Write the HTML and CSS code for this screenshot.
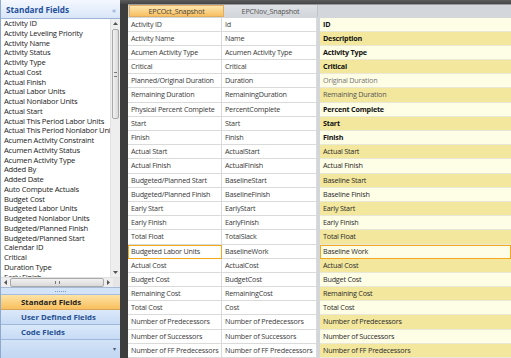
FILE: index.html
```html
<!DOCTYPE html>
<html lang="en">
<head>
    <meta charset="UTF-8">
    <title>Field Mapping</title>
    <link rel="stylesheet" href="styles.css">
</head>
<body>
<div class="app">

    <!-- Left field picker -->
    <div class="sidebar">
        <div class="side-head">
            <span>Standard Fields</span>
            <span class="collapse">&laquo;</span>
        </div>

        <div class="list-box">
            <div class="list-main">
                <ul class="field-list">
                    <li>Activity ID</li>
                    <li>Activity Leveling Priority</li>
                    <li>Activity Name</li>
                    <li>Activity Status</li>
                    <li>Activity Type</li>
                    <li>Actual Cost</li>
                    <li>Actual Finish</li>
                    <li>Actual Labor Units</li>
                    <li>Actual Nonlabor Units</li>
                    <li>Actual Start</li>
                    <li>Actual This Period Labor Units</li>
                    <li>Actual This Period Nonlabor Units</li>
                    <li>Acumen Activity Constraint</li>
                    <li>Acumen Activity Status</li>
                    <li>Acumen Activity Type</li>
                    <li>Added By</li>
                    <li>Added Date</li>
                    <li>Auto Compute Actuals</li>
                    <li>Budget Cost</li>
                    <li>Budgeted Labor Units</li>
                    <li>Budgeted Nonlabor Units</li>
                    <li>Budgeted/Planned Finish</li>
                    <li>Budgeted/Planned Start</li>
                    <li>Calendar ID</li>
                    <li>Critical</li>
                    <li>Duration Type</li>
                    <li>Early Finish</li>
                </ul>
                <div class="vscroll">
                    <div class="arrow"><svg width="5" height="3" viewBox="0 0 5 3"><path d="M0 3 L2.5 0 L5 3Z" fill="#555"/></svg></div>
                    <div class="vtrack"><div class="vthumb"><span class="grip-v"></span></div></div>
                    <div class="arrow"><svg width="5" height="3" viewBox="0 0 5 3"><path d="M0 0 L2.5 3 L5 0Z" fill="#555"/></svg></div>
                </div>
            </div>
            <div class="hscroll">
                <div class="arrow"><svg width="3" height="5" viewBox="0 0 3 5"><path d="M3 0 L0 2.5 L3 5Z" fill="#555"/></svg></div>
                <div class="htrack"><div class="hthumb"><span class="grip-h"></span></div></div>
                <div class="arrow"><svg width="3" height="5" viewBox="0 0 3 5"><path d="M0 0 L3 2.5 L0 5Z" fill="#555"/></svg></div>
                <div class="corner"></div>
            </div>
        </div>

        <div class="splitter"><span class="dots"></span></div>

        <div class="nav-btn active">Standard Fields</div>
        <div class="nav-btn">User Defined Fields</div>
        <div class="nav-btn">Code Fields</div>
        <div class="nav-foot"><span class="more">&#9662;</span></div>
    </div>

    <!-- Mapping area -->
    <div class="main">
        <div class="top-band"></div>
        <div class="tabs">
            <div class="tab active">EPCOct_Snapshot</div>
            <div class="tab">EPCNov_Snapshot</div>
        </div>

        <div class="mapping">
            <div class="grid" id="grid"></div>
            <div class="targets" id="targets"></div>
        </div>
    </div>
</div>

<script>
    // source field, snapshot field, target field, style of target row
    const rows = [
        ['Activity ID', 'Id', 'ID', 'key'],
        ['Activity Name', 'Name', 'Description', 'key'],
        ['Acumen Activity Type', 'Acumen Activity Type', 'Activity Type', 'key'],
        ['Critical', 'Critical', 'Critical', 'key'],
        ['Planned/Original Duration', 'Duration', 'Original Duration', 'dim'],
        ['Remaining Duration', 'RemainingDuration', 'Remaining Duration', 'soft'],
        ['Physical Percent Complete', 'PercentComplete', 'Percent Complete', 'key'],
        ['Start', 'Start', 'Start', 'key'],
        ['Finish', 'Finish', 'Finish', 'key'],
        ['Actual Start', 'ActualStart', 'Actual Start', ''],
        ['Actual Finish', 'ActualFinish', 'Actual Finish', ''],
        ['Budgeted/Planned Start', 'BaselineStart', 'Baseline Start', ''],
        ['Budgeted/Planned Finish', 'BaselineFinish', 'Baseline Finish', ''],
        ['Early Start', 'EarlyStart', 'Early Start', ''],
        ['Early Finish', 'EarlyFinish', 'Early Finish', ''],
        ['Total Float', 'TotalSlack', 'Total Float', ''],
        ['Budgeted Labor Units', 'BaselineWork', 'Baseline Work', 'selected'],
        ['Actual Cost', 'ActualCost', 'Actual Cost', ''],
        ['Budget Cost', 'BudgetCost', 'Budget Cost', ''],
        ['Remaining Cost', 'RemainingCost', 'Remaining Cost', ''],
        ['Total Cost', 'Cost', 'Total Cost', ''],
        ['Number of Predecessors', 'Number of Predecessors', 'Number of Predecessors', ''],
        ['Number of Successors', 'Number of Successors', 'Number of Successors', ''],
        ['Number of FF Predecessors', 'Number of FF Predecessors', 'Number of FF Predecessors', '']
    ];

    const grid = document.getElementById('grid');
    const targets = document.getElementById('targets');

    rows.forEach((r, i) => {
        const src = document.createElement('div');
        src.className = 'cell' + (r[3] === 'selected' ? ' selected' : '');
        src.textContent = r[0];
        grid.appendChild(src);

        const snap = document.createElement('div');
        snap.className = 'cell';
        snap.textContent = r[1];
        grid.appendChild(snap);

        const t = document.createElement('div');
        t.className = 'target' + (i % 2 ? ' alt' : '') + (r[3] ? ' ' + r[3] : '');
        t.textContent = r[2];
        targets.appendChild(t);
    });
</script>
</body>
</html>
```

FILE: styles.css
```css
body {
    margin: 0;
    width: 511px;
    height: 358px;
    overflow: hidden;
    font-family: 'Open Sans', 'Noto Sans', sans-serif;
    font-size: 7.2px;
    letter-spacing: -0.2px;
    color: #333;
    background-color: #3d3d3d;
}

.app {
    display: flex;
    height: 358px;
}

/* ---- sidebar ---- */

.sidebar {
    width: 120px;
    display: flex;
    flex-direction: column;
    background-color: #c5daf4;
    border-left: 1px solid #8fa9cc;
    box-sizing: border-box;
}

.side-head {
    height: 18px;
    display: flex;
    align-items: center;
    justify-content: space-between;
    padding: 0 4px 0 5px;
    font-size: 8.2px;
    letter-spacing: 0;
    font-weight: bold;
    color: #1d4f9e;
    background: linear-gradient(#f4f8fe, #d9e6f8);
    border-bottom: 1px solid #9cb4d6;
}

.collapse {
    font-weight: normal;
    color: #6d8fc6;
    font-size: 8px;
}

.list-box {
    height: 268px;
    display: flex;
    flex-direction: column;
    background-color: #fff;
    border-bottom: 1px solid #a7bbd6;
}

.list-main {
    flex: 1;
    display: flex;
    overflow: hidden;
}

.field-list {
    flex: 1;
    list-style: none;
    margin: 0;
    padding: 0 0 0 3px;
    overflow: hidden;
    white-space: nowrap;
    font-size: 7.6px;
}

.field-list li {
    height: 9.75px;
    line-height: 9.75px;
    color: #222;
}

.vscroll {
    width: 9px;
    display: flex;
    flex-direction: column;
    background-color: #eeeeee;
    border-left: 1px solid #e2e2e2;
}

.arrow {
    height: 9px;
    width: 9px;
    display: flex;
    align-items: center;
    justify-content: center;
    flex-shrink: 0;
}

.vtrack {
    flex: 1;
    padding-top: 1px;
}

.vthumb {
    height: 88px;
    margin: 0 1px;
    border: 1px solid #a9a9a9;
    border-radius: 2px;
    background: linear-gradient(90deg, #f2f2f2, #d9d9d9);
    display: flex;
    align-items: center;
    justify-content: center;
}

.grip-v {
    width: 3px;
    height: 3px;
    border-top: 1px solid #777;
    border-bottom: 1px solid #777;
}

.hscroll {
    height: 9px;
    display: flex;
    background-color: #eeeeee;
    border-top: 1px solid #e2e2e2;
}

.htrack {
    flex: 1;
}

.hthumb {
    height: 7px;
    width: 92px;
    border: 1px solid #a9a9a9;
    border-radius: 2px;
    background: linear-gradient(#f2f2f2, #d9d9d9);
    display: flex;
    align-items: center;
    justify-content: center;
}

.grip-h {
    width: 3px;
    height: 3px;
    border-left: 1px solid #777;
    border-right: 1px solid #777;
}

.corner {
    width: 9px;
    background-color: #e6e6e6;
}

.splitter {
    height: 6px;
    display: flex;
    align-items: center;
    justify-content: center;
    background-color: #d4e4f8;
    border-bottom: 1px solid #a3bbdc;
}

.dots {
    width: 12px;
    height: 1px;
    background: repeating-linear-gradient(90deg, #7f99c0 0 1px, transparent 1px 2px);
}

.nav-btn {
    height: 14px;
    line-height: 14px;
    padding-left: 20px;
    font-size: 7.8px;
    letter-spacing: 0;
    font-weight: bold;
    color: #244f91;
    background: linear-gradient(#dbe8fa, #c6dbf5);
    border-bottom: 1px solid #9fb8da;
}

.nav-btn.active {
    color: #1e1e1e;
    background: linear-gradient(#fde3a6, #f9bf5d);
    border-bottom-color: #d6a45a;
}

.nav-foot {
    flex: 1;
    display: flex;
    justify-content: flex-end;
    align-items: center;
    padding-right: 4px;
    background: linear-gradient(#d3e3f8, #c2d7f2);
}

.more {
    font-size: 6px;
    color: #4a5d7c;
}

/* ---- mapping area ---- */

.main {
    flex: 1;
    display: flex;
    flex-direction: column;
    padding-left: 8px;
    overflow: hidden;
}

.top-band {
    height: 6px;
    margin-left: -8px;
    background: linear-gradient(#5c5c5c, #454545);
}

.tabs {
    height: 15px;
    display: flex;
    padding-left: 1px;
    background-color: #d3d6db;
    border-top: 1px solid #9a9a9a;
    box-sizing: border-box;
}

.tab {
    width: 93px;
    display: flex;
    align-items: center;
    justify-content: center;
    color: #555;
    background: linear-gradient(#dfe1e5, #d2d5da);
    border-right: 1px solid #c0c3c8;
}

.tab.active {
    color: #4e4434;
    background: linear-gradient(#fde6ae, #f7bf62);
    border: 1px solid #e0ae5e;
}

.mapping {
    flex: 1;
    display: flex;
    gap: 3px;
    background-color: #d3d6db;
    padding-top: 0.7px;
}

.grid {
    display: grid;
    grid-template-columns: 94px 95px;
    grid-auto-rows: 14.2px;
    background-color: #fff;
    align-content: start;
}

.cell {
    padding-left: 3px;
    line-height: 13.2px;
    white-space: nowrap;
    overflow: hidden;
    color: #3a3a3a;
    border-right: 1px solid #dadada;
    border-bottom: 1px solid #dadada;
}

.cell.selected {
    border: 1.5px solid #f4a81c;
    line-height: 11px;
    padding-left: 2px;
}

.targets {
    flex: 1;
    display: flex;
    flex-direction: column;
}

.target {
    height: 14.2px;
    flex-shrink: 0;
    box-sizing: border-box;
    padding-left: 3px;
    line-height: 13.2px;
    white-space: nowrap;
    color: #2a2a2a;
    background-color: #fefde5;
    border-bottom: 1px solid #e9e7d6;
}

.target.alt {
    background-color: #f3e79e;
}

.target.key {
    font-weight: bold;
    color: #111;
}

.target.dim {
    color: #777;
}

.target.soft {
    color: #555;
}

.target.selected {
    border: 1.5px solid #f4a81c;
    line-height: 11px;
    padding-left: 2px;
}
```
